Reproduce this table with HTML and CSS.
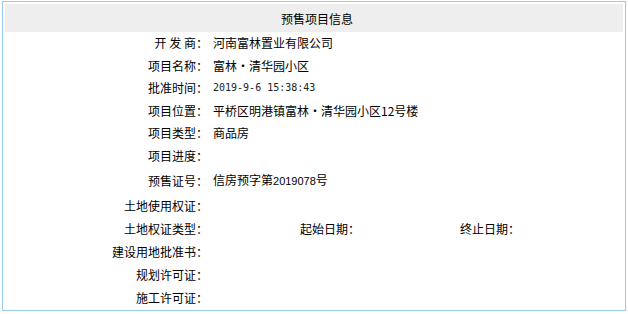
FILE: index.html
```html
<!DOCTYPE html>
<html lang="zh">
<head>
<meta charset="utf-8">
<title>预售项目信息</title>
<link rel="stylesheet" href="styles.css">
</head>
<body>
<div class="panel">
  <div class="title">预售项目信息</div>
  <div class="rows">
    <div class="row"><span class="label">开 发 商：</span><span class="value">河南富林置业有限公司</span></div>
    <div class="row"><span class="label">项目名称：</span><span class="value">富林・清华园小区</span></div>
    <div class="row"><span class="label">批准时间：</span><span class="value mono">2019-9-6 15:38:43</span></div>
    <div class="row"><span class="label">项目位置：</span><span class="value">平桥区明港镇富林・清华园小区12号楼</span></div>
    <div class="row"><span class="label">项目类型：</span><span class="value">商品房</span></div>
    <div class="row"><span class="label">项目进度：</span><span class="value"></span></div>
    <div class="row row-tall"><span class="label">预售证号：</span><span class="value">信房预字第<span class="num">2019078</span>号</span></div>
    <div class="row row-mid"><span class="label">土地使用权证：</span><span class="value"></span></div>
    <div class="row row-mid"><span class="label">土地权证类型：</span><span class="value"></span><span class="sub sub-start">起始日期：</span><span class="sub">终止日期：</span></div>
    <div class="row row-mid"><span class="label">建设用地批准书：</span><span class="value"></span></div>
    <div class="row row-mid"><span class="label">规划许可证：</span><span class="value"></span></div>
    <div class="row row-mid"><span class="label">施工许可证：</span><span class="value"></span></div>
  </div>
</div>
</body>
</html>
```
FILE: styles.css
```css
html, body {
  margin: 0;
  padding: 0;
  background: #ffffff;
}
body {
  font-family: "Noto Sans CJK SC", "Liberation Sans", sans-serif;
  font-size: 12px;
  color: #000;
}
.panel {
  margin: 1px 2px 0 2px;
  width: 618px;
  height: 304px;
  border: 1px solid #99c8f2;
  padding: 2px;
}
.title {
  height: 28px;
  background: #eeeeee;
  display: flex;
  align-items: center;
  justify-content: center;
  font-size: 12px;
  padding-left: 6px;
}
.rows {
  display: flex;
  flex-direction: column;
  padding-top: 0;
}
.row {
  display: flex;
  align-items: center;
  height: 22.5px;
  line-height: 1;
}
.row-tall {
  height: 27px;
}
.row-mid {
  height: 23px;
}
.label {
  width: 203px;
  text-align: right;
  white-space: pre;
}
.value {
  margin-left: 5px;
  white-space: nowrap;
}
.mono {
  font-family: "DejaVu Sans Mono", "Liberation Mono", monospace;
  font-size: 10px;
  color: #222;
}
.num {
  font-family: "Liberation Sans", sans-serif;
  font-size: 11px;
}
.sub {
  width: 160px;
}
.sub-start {
  margin-left: 87px;
}
```
